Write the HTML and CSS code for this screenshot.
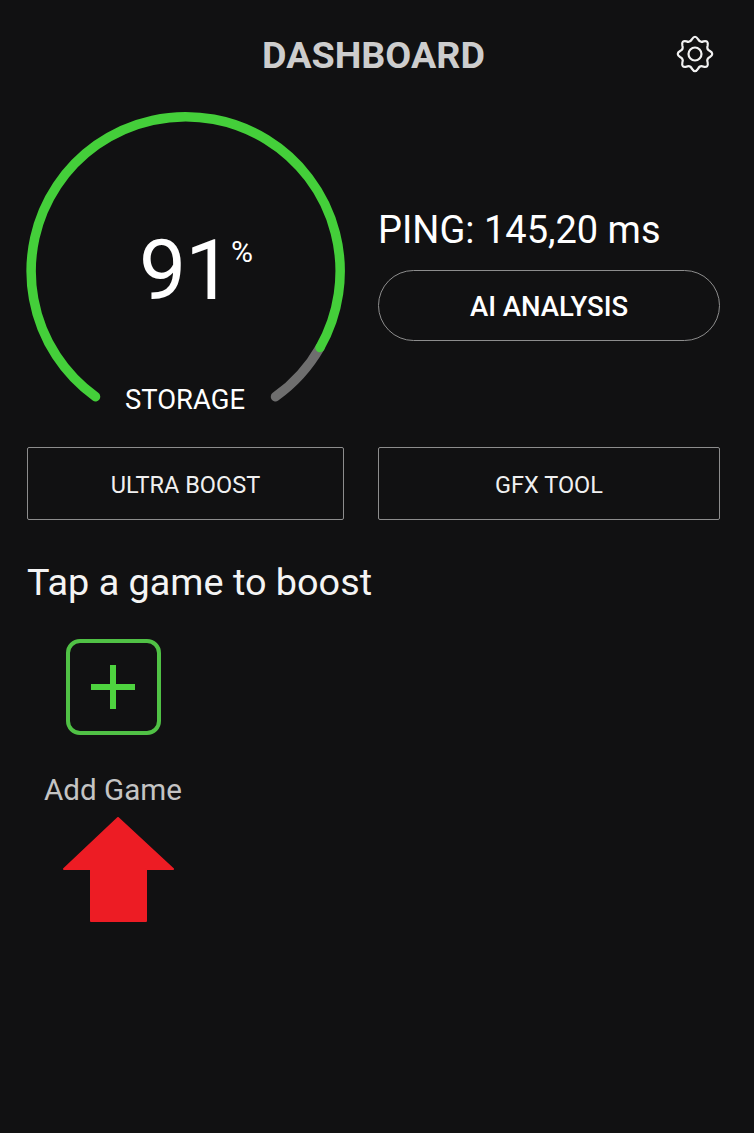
FILE: index.html
```html
<!doctype html>
<html>
  <head>
    <meta charset="utf-8"/>
    <meta name="viewport" content="width=device-width, initial-scale=1.0">
    <title>Dashboard</title>
    <link rel="stylesheet" href="styles.css">
  </head>
  <body>
    <header class="topbar">
      <h1 class="topbar-title">DASHBOARD</h1>
      <svg class="gear" viewBox="-20 -20 40 40">
        <path d="M-2.96 -14.91Q0 -19.6 2.96 -14.91Q4.83 -11.2 8.45 -12.63Q13.8 -13.8 12.63 -8.45Q11.2 -4.83 14.91 -2.96Q19.6 0 14.91 2.96Q11.2 4.83 12.63 8.45Q13.8 13.8 8.45 12.63Q4.83 11.2 2.96 14.91Q0 19.6 -2.96 14.91Q-4.83 11.2 -8.45 12.63Q-13.8 13.8 -12.63 8.45Q-11.2 4.83 -14.91 2.96Q-19.6 0 -14.91 -2.96Q-11.2 -4.83 -12.63 -8.45Q-13.8 -13.8 -8.45 -12.63Q-4.83 -11.2 -2.96 -14.91Z"/>
        <circle r="6.5"/>
      </svg>
    </header>

    <section class="stats">
      <div class="gauge">
        <svg class="gauge-ring" viewBox="0 0 317 300">
          <path class="ring-rest" d="M320 347.5A154.5 154.5 0 0 1 275.5 396.7" transform="translate(-27 -112)"/>
          <path class="ring-used" d="M95.5 396.7A154.5 154.5 0 1 1 320 347.5" transform="translate(-27 -112)"/>
        </svg>
        <div class="gauge-value"><span class="gauge-digits">91</span><span class="gauge-unit">%</span></div>
        <div class="gauge-label">STORAGE</div>
      </div>
      <div class="side">
        <div class="ping">PING: 145,20 ms</div>
        <div class="pill">AI ANALYSIS</div>
      </div>
    </section>

    <section class="tools">
      <div class="tool tool-left">ULTRA BOOST</div>
      <div class="tool tool-right">GFX TOOL</div>
    </section>

    <h2 class="games-title">Tap a game to boost</h2>

    <div class="add-game">
      <div class="add-tile">
        <svg class="add-plus" viewBox="0 0 44 44">
          <path d="M22 0V44M0 22H44"/>
        </svg>
      </div>
      <div class="add-label">Add Game</div>
      <svg class="arrow" viewBox="0 0 112 106">
        <path d="M55 1L110 52H83V104H28V52H1Z"/>
      </svg>
    </div>
  </body>
</html>
```

FILE: styles.css
```css
* {
  padding: 0;
  margin: 0;
  box-sizing: border-box;
}

html, body {
  height: 100%;
}

body {
  background: #111112;
  color: #fff;
  font-family: Roboto, "Liberation Sans", sans-serif;
  padding: 0 34px 0 27px;
  overflow: hidden;
}

.topbar {
  height: 112px;
  display: flex;
  justify-content: center;
  position: relative;
}

.topbar-title {
  font-size: 37.7px;
  font-weight: 700;
  color: #cdcdcd;
  line-height: 41px;
  margin-top: 35px;
}

.gear {
  position: absolute;
  right: 5px;
  top: 33.5px;
  width: 40px;
  height: 40px;
  fill: none;
  stroke: #f2f2f2;
  stroke-width: 2.2;
}

.stats {
  display: flex;
  gap: 34px;
  height: 335px;
}

.gauge {
  width: 317px;
  position: relative;
}

.gauge-ring {
  display: block;
  width: 317px;
  height: 300px;
  overflow: visible;
  fill: none;
  stroke-width: 9.5;
  stroke-linecap: round;
}

.ring-used {
  stroke: #44cf3a;
}

.ring-rest {
  stroke: #6e6e6e;
}

.gauge-value {
  position: absolute;
  left: 112px;
  top: 110px;
  font-size: 84px;
  line-height: 98px;
}

.gauge-digits {
  letter-spacing: -1px;
}

.gauge-unit {
  position: absolute;
  left: 92px;
  top: 12px;
  font-size: 30px;
  line-height: 35px;
}

.gauge-label {
  position: absolute;
  left: 0;
  width: 317px;
  top: 272px;
  text-align: center;
  font-size: 27.4px;
  line-height: 32px;
  padding-right: 1px;
}

.side {
  width: 342px;
  padding-top: 97px;
}

.ping {
  font-size: 38px;
  line-height: 42px;
}

.pill {
  margin-top: 19px;
  height: 71px;
  padding-top: 2px;
  border: 1px solid #8d8d8d;
  border-radius: 36px;
  display: flex;
  align-items: center;
  justify-content: center;
  font-size: 27.5px;
  font-weight: 500;
}

.tools {
  display: flex;
  gap: 34px;
}

.tool {
  height: 73px;
  padding-top: 3px;
  border: 1px solid #8d8d8d;
  border-radius: 2px;
  display: flex;
  align-items: center;
  justify-content: center;
  font-size: 23.5px;
  color: #f0f0f0;
}

.tool-left {
  width: 317px;
}

.tool-right {
  width: 342px;
}

.games-title {
  font-size: 37.8px;
  font-weight: 400;
  line-height: 42px;
  margin-top: 41px;
  color: #f4f4f4;
}

.add-game {
  width: 172px;
  margin-top: 36px;
  display: flex;
  flex-direction: column;
  align-items: center;
}

.add-tile {
  width: 95px;
  height: 96px;
  border: 4px solid #50c145;
  border-radius: 14px;
  display: flex;
  align-items: center;
  justify-content: center;
}

.add-plus {
  width: 44px;
  height: 44px;
  fill: none;
  stroke: #4ed33f;
  stroke-width: 6;
}

.add-label {
  margin-top: 38px;
  font-size: 29.6px;
  line-height: 34px;
  color: #c4c4c4;
}

.arrow {
  width: 112px;
  height: 106px;
  margin-top: 10px;
  margin-left: 12px;
  fill: #ed1c24;
  stroke: #ed1c24;
  stroke-width: 2;
  stroke-linejoin: round;
}
```
